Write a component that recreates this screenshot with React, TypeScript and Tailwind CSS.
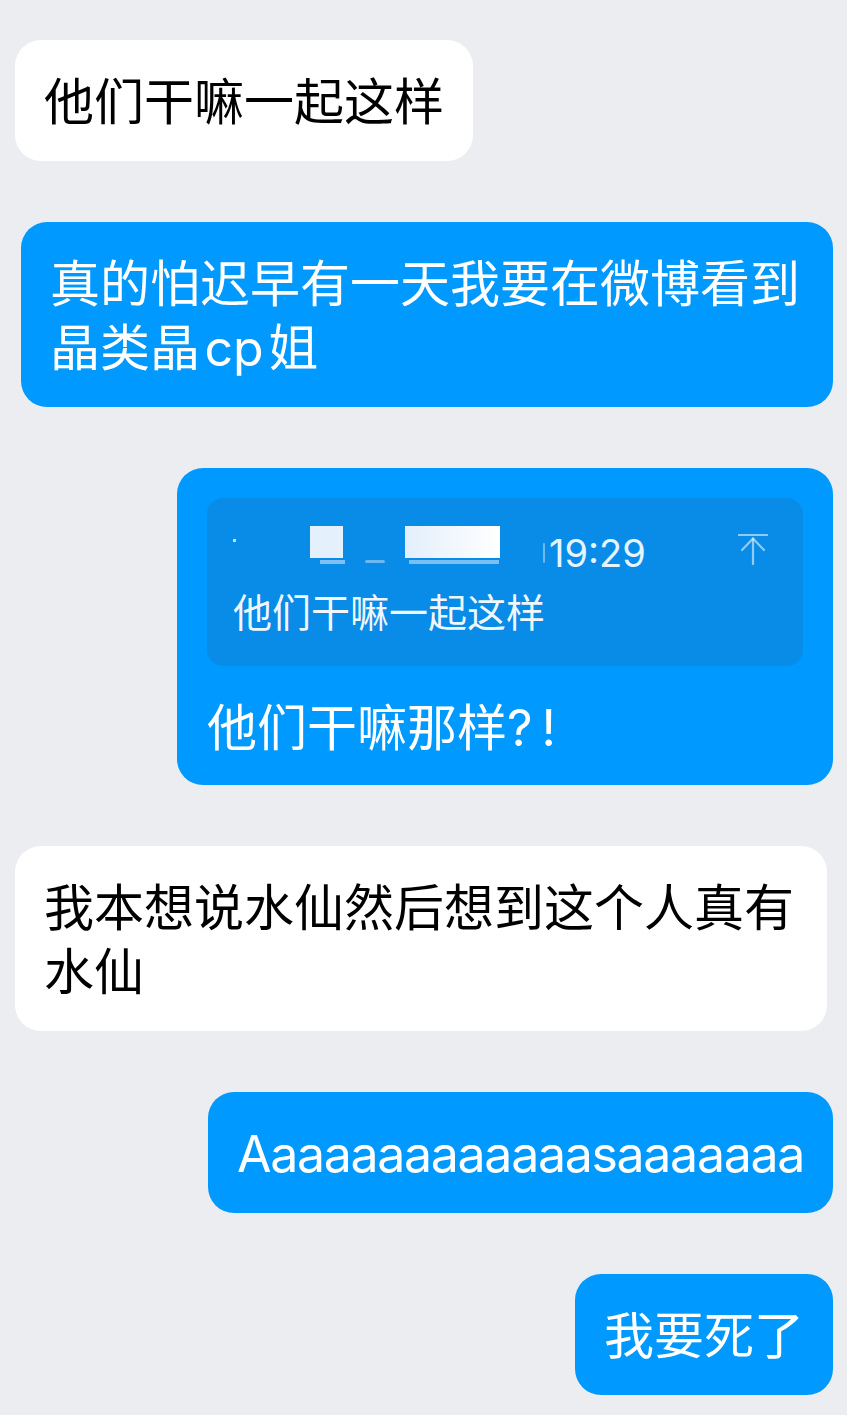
import React from "react";

const font = { fontFamily: 'Inter, "Noto Sans CJK SC", sans-serif' };

const Bubble = ({ mine, children }: { mine?: boolean; children: React.ReactNode }) => (
  <div
    className={`max-w-[812px] rounded-[26px] px-[29px] pt-[30px] pb-[27px] text-[50px] leading-[64px] ${
      mine ? "self-end bg-[#0099ff] text-white" : "self-start bg-white text-black"
    }`}
  >
    {children}
  </div>
);

// blurred-out nickname in the quote header
const HiddenName = () => (
  <svg width="312" height="44" viewBox="0 0 312 44" className="overflow-visible shrink-0">
    <defs>
      <linearGradient id="nm" x1="0" x2="1" y1="0" y2="0">
        <stop offset="0" stopColor="#e2effc" />
        <stop offset="0.5" stopColor="#f1f7fe" />
        <stop offset="1" stopColor="#ffffff" />
      </linearGradient>
    </defs>
    <rect x="0" y="8" width="3" height="3" fill="#ffffff" opacity="0.75" />
    <rect x="77" y="-5" width="33" height="32" fill="#e4f0fc" />
    <rect x="172" y="-5" width="95" height="32" fill="url(#nm)" />
    <rect x="87" y="29" width="25" height="4" fill="#cfe5fb" opacity="0.6" />
    <rect x="132" y="29" width="20" height="3" rx="1.5" fill="#cfe5fb" opacity="0.5" />
    <rect x="176" y="29" width="90" height="4" fill="#d6e9fb" opacity="0.55" />
    <rect x="310" y="12" width="2" height="20" rx="1" fill="#cfe5fb" opacity="0.5" />
  </svg>
);

export default function App() {
  return (
    <div
      className="min-h-screen w-full bg-[#ecedf1] pt-[40px] pb-[20px] pl-[15px] pr-[14px] flex flex-col gap-[61px]"
      style={font}
    >
      <Bubble>他们干嘛一起这样</Bubble>

      <Bubble mine>真的怕迟早有一天我要在微博看到晶类晶{"\u200a"}cp{"\u200a"}姐</Bubble>

      <div className="self-end w-[656px] rounded-[26px] bg-[#0099ff] text-white px-[30px] pt-[30px] pb-[25px]">
        <div className="rounded-[16px] bg-[#098ce8] pl-[26px] pr-[35px] pt-[33px] pb-[31px]">
          <div className="flex items-center h-[44px]">
            <HiddenName />
            <span className="ml-[4px] text-[38px] leading-[44px] text-white/90">19:29</span>
            <svg
              width="30"
              height="31"
              viewBox="0 0 30 31"
              fill="none"
              stroke="#ffffff"
              strokeOpacity="0.55"
              strokeWidth="2.2"
              strokeLinecap="round"
              strokeLinejoin="round"
              className="ml-auto mb-[7px]"
            >
              <path d="M1 1h28" />
              <path d="M4 16 15 4.5 26 16" />
              <path d="M15 4.5V30" />
            </svg>
          </div>
          <div className="mt-[16px] text-[39px] leading-[44px] text-white/95">他们干嘛一起这样</div>
        </div>
        <div className="mt-[30px] text-[50px] leading-[64px]">
          他们干嘛那样<span className="tracking-[9px]">?!</span>
        </div>
      </div>

      <Bubble>我本想说水仙然后想到这个人真有水仙</Bubble>

      <Bubble mine>
        <span className="tracking-[-1.3px]">Aaaaaaaaaaaaasaaaaaaa</span>
      </Bubble>

      <Bubble mine>我要死了</Bubble>
    </div>
  );
}
